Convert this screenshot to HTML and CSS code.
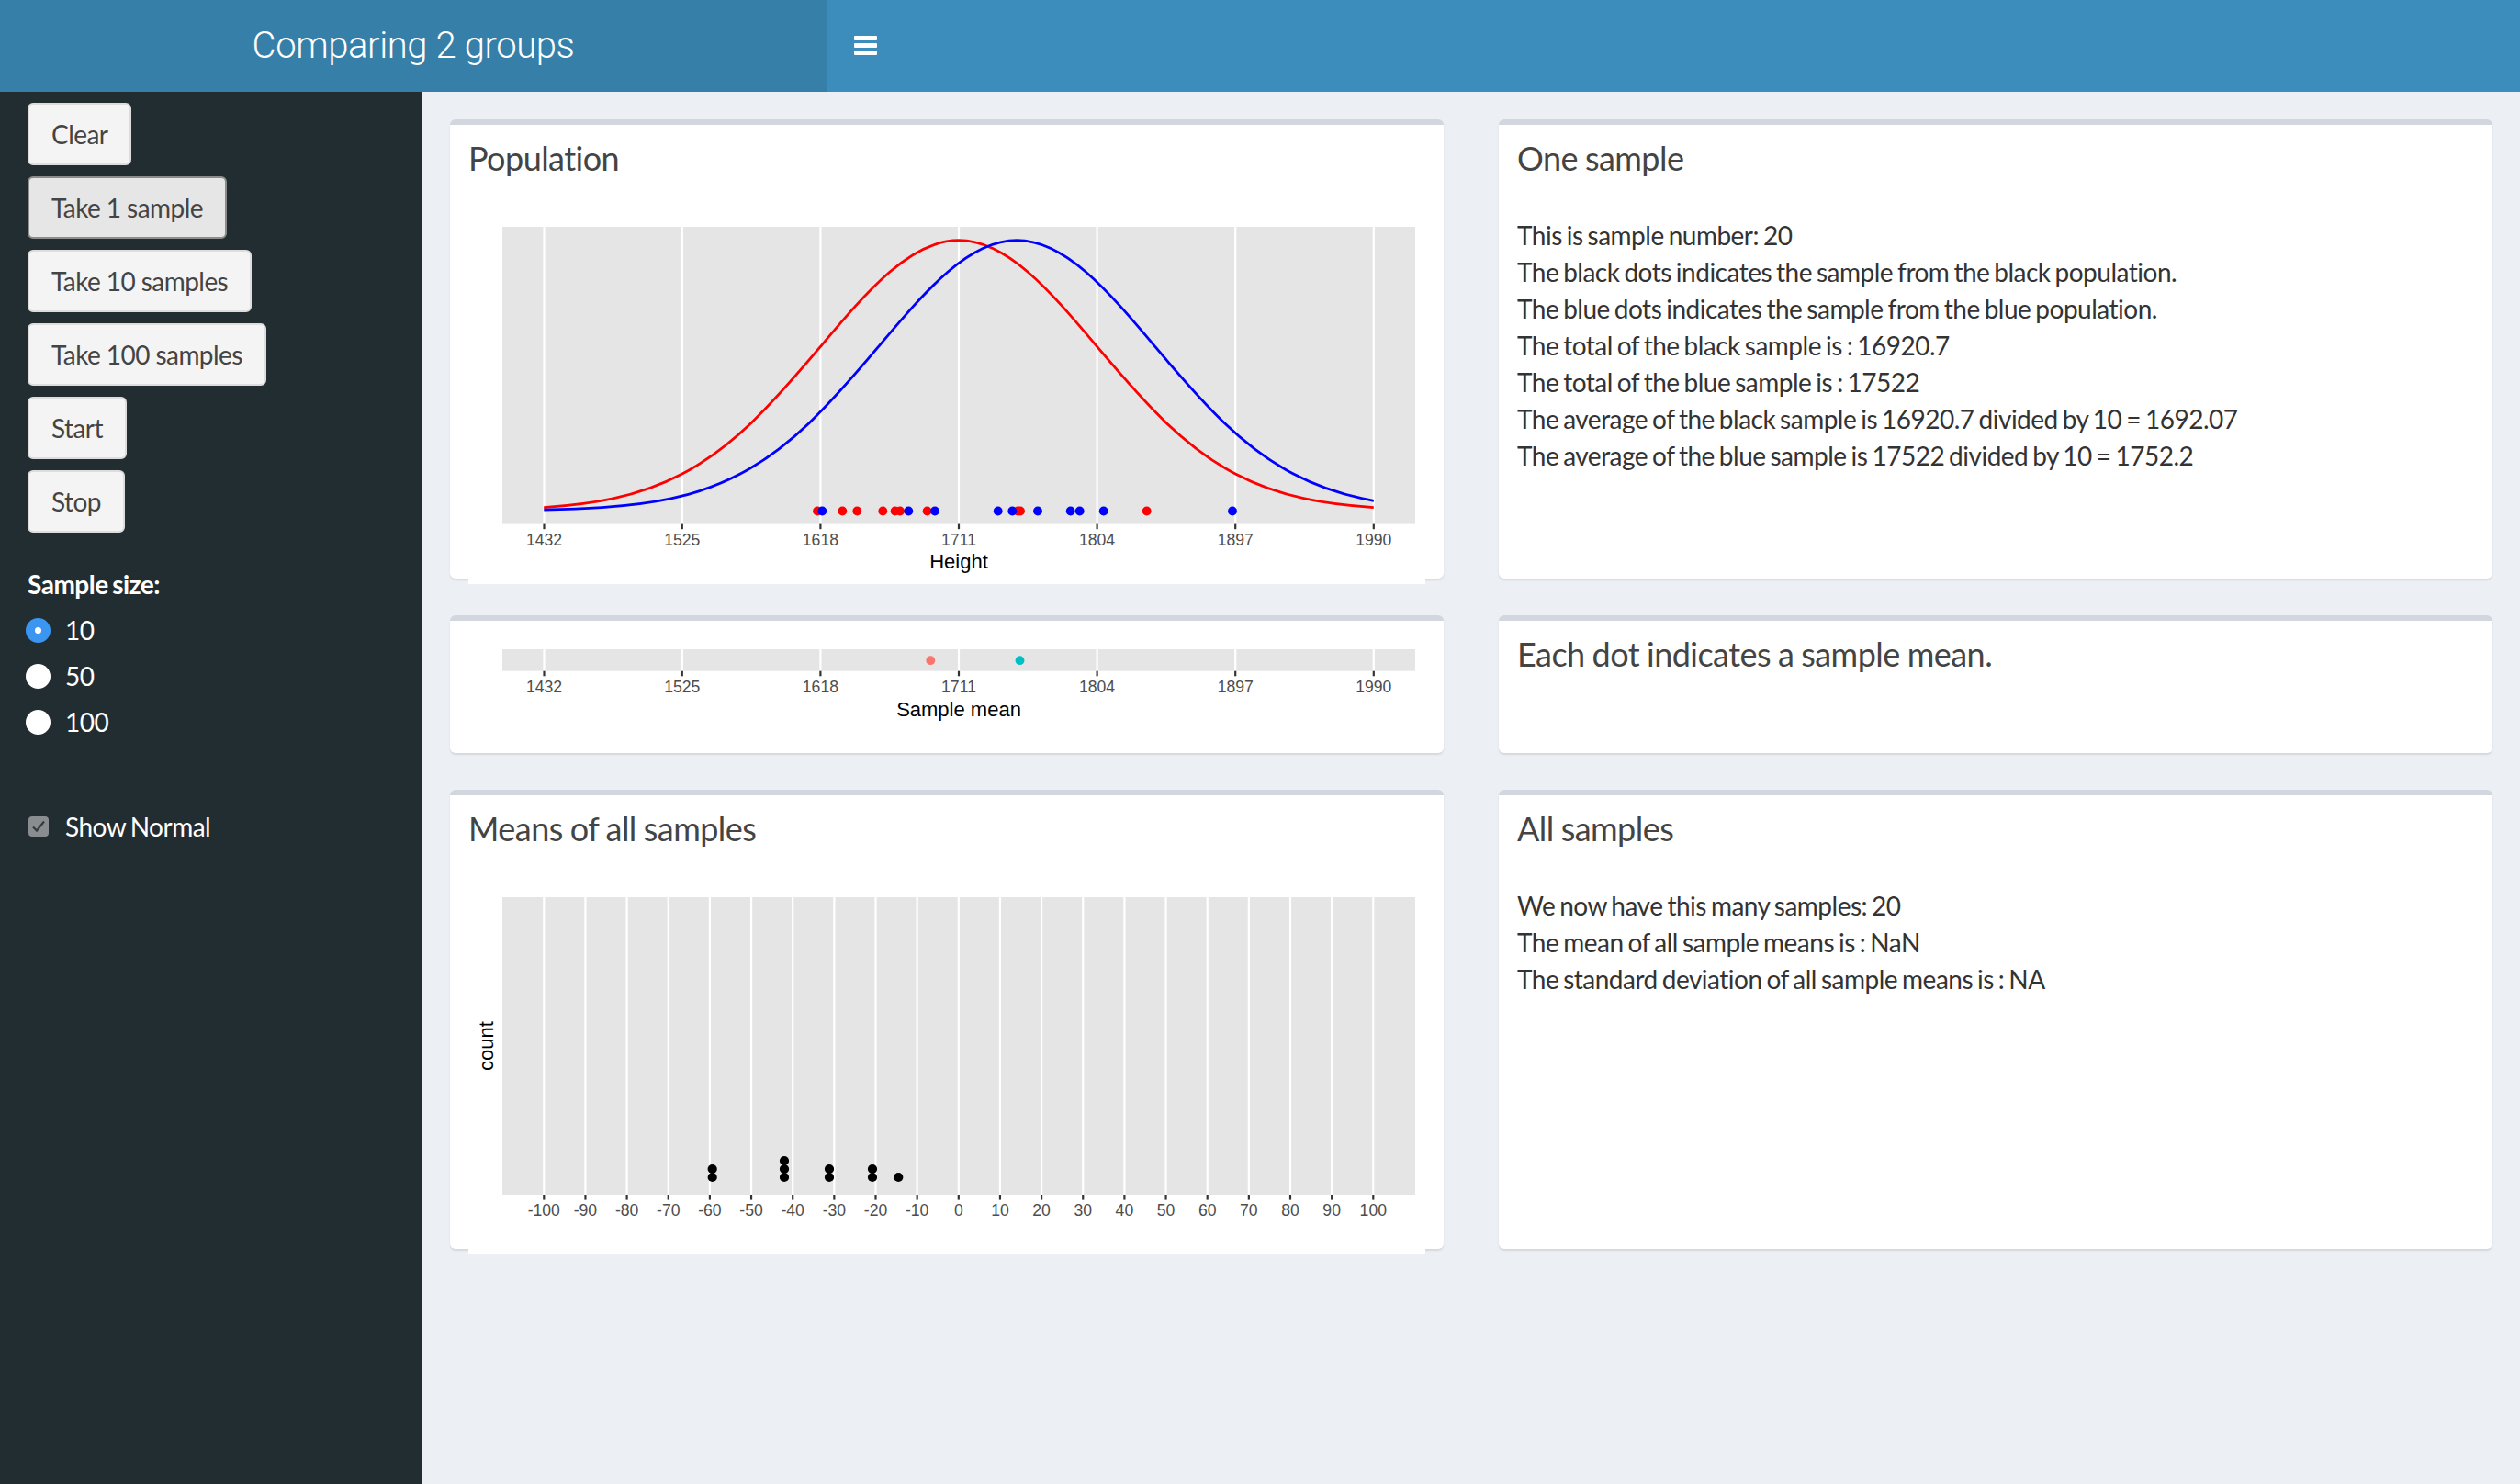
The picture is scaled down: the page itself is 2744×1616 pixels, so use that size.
FILE: index.html
```html
<!DOCTYPE html>
<html lang="en">
<head>
<meta charset="utf-8">
<title>Comparing 2 groups</title>
<link rel="stylesheet" href="styles.css">
</head>
<body>
<header class="main-header">
  <div class="logo">Comparing 2 groups</div>
  <nav class="navbar">
    <a class="sidebar-toggle" href="#">
      <svg width="25" height="21" viewBox="0 0 25 21"><rect x="0" y="0" width="25" height="5" rx="1" fill="#fff"/><rect x="0" y="8" width="25" height="5" rx="1" fill="#fff"/><rect x="0" y="16" width="25" height="5" rx="1" fill="#fff"/></svg>
    </a>
  </nav>
</header>
<div class="wrapper">
  <aside class="sidebar">
    <button class="btn">Clear</button>
    <button class="btn btn-focus">Take 1 sample</button>
    <button class="btn">Take 10 samples</button>
    <button class="btn">Take 100 samples</button>
    <button class="btn">Start</button>
    <button class="btn">Stop</button>
    <div class="input-group">
      <div class="input-label">Sample size:</div>
      <label class="radio"><span class="radio-dot checked"></span><span>10</span></label>
      <label class="radio"><span class="radio-dot"></span><span>50</span></label>
      <label class="radio"><span class="radio-dot"></span><span>100</span></label>
    </div>
    <div class="input-group check-group">
      <label class="check"><span class="check-box"><svg width="22" height="22" viewBox="0 0 22 22"><path d="M5 11.5 L9 15.5 L17 5.5" fill="none" stroke="#3a3a3a" stroke-width="2.2"/></svg></span><span>Show Normal</span></label>
    </div>
  </aside>
  <main class="content">
    <div class="row">
      <div class="box tall">
        <div class="box-header"><h3 class="box-title">Population</h3></div>
        <div class="box-body">
          <svg class="plot" width="1042" height="400" viewBox="0 0 1042 400">
            <rect x="37" y="11" width="994" height="323.6" fill="#e5e5e5"/>
            <g stroke="#fff" stroke-width="2.2">
              <line x1="82.5" y1="11" x2="82.5" y2="334.6"/>
              <line x1="232.8" y1="11" x2="232.8" y2="334.6"/>
              <line x1="383.4" y1="11" x2="383.4" y2="334.6"/>
              <line x1="534" y1="11" x2="534" y2="334.6"/>
              <line x1="684.6" y1="11" x2="684.6" y2="334.6"/>
              <line x1="835.2" y1="11" x2="835.2" y2="334.6"/>
              <line x1="985.8" y1="11" x2="985.8" y2="334.6"/>
            </g>
            <g stroke="#333" stroke-width="2.2">
              <line x1="82.5" y1="334.6" x2="82.5" y2="340.2"/>
              <line x1="232.8" y1="334.6" x2="232.8" y2="340.2"/>
              <line x1="383.4" y1="334.6" x2="383.4" y2="340.2"/>
              <line x1="534" y1="334.6" x2="534" y2="340.2"/>
              <line x1="684.6" y1="334.6" x2="684.6" y2="340.2"/>
              <line x1="835.2" y1="334.6" x2="835.2" y2="340.2"/>
              <line x1="985.8" y1="334.6" x2="985.8" y2="340.2"/>
            </g>
            <g class="tick-label">
              <text x="82.5" y="358">1432</text>
              <text x="232.8" y="358">1525</text>
              <text x="383.4" y="358">1618</text>
              <text x="534" y="358">1711</text>
              <text x="684.6" y="358">1804</text>
              <text x="835.2" y="358">1897</text>
              <text x="985.8" y="358">1990</text>
            </g>
            <text class="axis-title" x="534" y="383">Height</text>
            <path fill="none" stroke="#ff0000" stroke-width="2.8" d="M82.2,316.63 C107.3,315.00 132.4,312.36 157.5,306.97 C182.6,301.58 207.7,293.36 232.8,280.09 C257.9,266.82 283.0,248.27 308.1,224.39 C333.2,200.51 358.3,171.21 383.4,141.47 C408.5,111.73 433.6,81.91 458.7,60.28 C483.8,38.65 508.9,25.72 534.0,25.72 C559.1,25.72 584.2,38.65 609.3,60.28 C634.4,81.91 659.5,111.73 684.6,141.47 C709.7,171.21 734.8,200.51 759.9,224.39 C785.0,248.27 810.1,266.82 835.2,280.09 C860.3,293.36 885.4,301.58 910.5,306.97 C935.6,312.36 960.7,315.00 985.8,316.63"/>
            <path fill="none" stroke="#0000ff" stroke-width="2.8" d="M82.3,319.05 C103.3,318.64 124.4,318.00 145.4,316.63 C170.5,315.00 195.6,312.36 220.7,306.97 C245.8,301.58 270.9,293.36 296.0,280.09 C321.1,266.82 346.2,248.27 371.3,224.39 C396.4,200.51 421.5,171.21 446.6,141.47 C471.7,111.73 496.8,81.91 521.9,60.28 C547.0,38.65 572.1,25.72 597.2,25.72 C622.3,25.72 647.4,38.65 672.5,60.28 C697.6,81.91 722.7,111.73 747.8,141.47 C772.9,171.21 798.0,200.51 823.1,224.39 C848.2,248.27 873.3,266.82 898.4,280.09 C923.5,293.36 948.6,301.58 973.7,306.97 C977.8,307.84 981.8,308.65 985.9,309.38"/>
            <g fill="#ff0000">
              <circle cx="380" cy="320.5" r="4.9"/>
              <circle cx="407.3" cy="320.5" r="4.9"/>
              <circle cx="423.3" cy="320.5" r="4.9"/>
              <circle cx="451.3" cy="320.5" r="4.9"/>
              <circle cx="464.6" cy="320.5" r="4.9"/>
              <circle cx="470" cy="320.5" r="4.9"/>
              <circle cx="499.6" cy="320.5" r="4.9"/>
              <circle cx="598.3" cy="320.5" r="4.9"/>
              <circle cx="601" cy="320.5" r="4.9"/>
              <circle cx="738.7" cy="320.5" r="4.9"/>
            </g>
            <g fill="#0000ff">
              <circle cx="385.3" cy="320.5" r="4.9"/>
              <circle cx="479.3" cy="320.5" r="4.9"/>
              <circle cx="508" cy="320.5" r="4.9"/>
              <circle cx="576.7" cy="320.5" r="4.9"/>
              <circle cx="592.3" cy="320.5" r="4.9"/>
              <circle cx="620" cy="320.5" r="4.9"/>
              <circle cx="655.7" cy="320.5" r="4.9"/>
              <circle cx="665.7" cy="320.5" r="4.9"/>
              <circle cx="691.7" cy="320.5" r="4.9"/>
              <circle cx="832" cy="320.5" r="4.9"/>
            </g>
          </svg>
        </div>
      </div>
      <div class="box tall">
        <div class="box-header"><h3 class="box-title">One sample</h3></div>
        <div class="box-body text-body">
          <div>This is sample number: 20</div>
          <div>The black dots indicates the sample from the black population.</div>
          <div>The blue dots indicates the sample from the blue population.</div>
          <div>The total of the black sample is : 16920.7</div>
          <div>The total of the blue sample is : 17522</div>
          <div>The average of the black sample is 16920.7 divided by 10 = 1692.07</div>
          <div>The average of the blue sample is 17522 divided by 10 = 1752.2</div>
        </div>
      </div>
    </div>
    <div class="row">
      <div class="box short">
        <div class="box-body">
          <svg class="plot" width="1042" height="100" viewBox="0 0 1042 100">
            <rect x="37" y="11" width="994" height="23.7" fill="#e5e5e5"/>
            <g stroke="#fff" stroke-width="2.2">
              <line x1="82.5" y1="11" x2="82.5" y2="34.7"/>
              <line x1="232.8" y1="11" x2="232.8" y2="34.7"/>
              <line x1="383.4" y1="11" x2="383.4" y2="34.7"/>
              <line x1="534" y1="11" x2="534" y2="34.7"/>
              <line x1="684.6" y1="11" x2="684.6" y2="34.7"/>
              <line x1="835.2" y1="11" x2="835.2" y2="34.7"/>
              <line x1="985.8" y1="11" x2="985.8" y2="34.7"/>
            </g>
            <g stroke="#333" stroke-width="2.2">
              <line x1="82.5" y1="34.7" x2="82.5" y2="40.3"/>
              <line x1="232.8" y1="34.7" x2="232.8" y2="40.3"/>
              <line x1="383.4" y1="34.7" x2="383.4" y2="40.3"/>
              <line x1="534" y1="34.7" x2="534" y2="40.3"/>
              <line x1="684.6" y1="34.7" x2="684.6" y2="40.3"/>
              <line x1="835.2" y1="34.7" x2="835.2" y2="40.3"/>
              <line x1="985.8" y1="34.7" x2="985.8" y2="40.3"/>
            </g>
            <g class="tick-label">
              <text x="82.5" y="58">1432</text>
              <text x="232.8" y="58">1525</text>
              <text x="383.4" y="58">1618</text>
              <text x="534" y="58">1711</text>
              <text x="684.6" y="58">1804</text>
              <text x="835.2" y="58">1897</text>
              <text x="985.8" y="58">1990</text>
            </g>
            <text class="axis-title" x="534" y="84">Sample mean</text>
            <circle cx="503.3" cy="23.2" r="4.9" fill="#f8766d"/>
            <circle cx="600.5" cy="23.2" r="4.9" fill="#00bfc4"/>
          </svg>
        </div>
      </div>
      <div class="box short">
        <div class="box-header"><h3 class="box-title">Each dot indicates a sample mean.</h3></div>
      </div>
    </div>
    <div class="row">
      <div class="box tall">
        <div class="box-header"><h3 class="box-title">Means of all samples</h3></div>
        <div class="box-body">
          <svg class="plot" width="1042" height="400" viewBox="0 0 1042 400">
            <rect x="37" y="11" width="994" height="324" fill="#e5e5e5"/>
            <g stroke="#fff" stroke-width="2.2">
              <line x1="82.3" y1="11" x2="82.3" y2="335"/>
              <line x1="127.45" y1="11" x2="127.45" y2="335"/>
              <line x1="172.6" y1="11" x2="172.6" y2="335"/>
              <line x1="217.75" y1="11" x2="217.75" y2="335"/>
              <line x1="262.9" y1="11" x2="262.9" y2="335"/>
              <line x1="308.05" y1="11" x2="308.05" y2="335"/>
              <line x1="353.2" y1="11" x2="353.2" y2="335"/>
              <line x1="398.35" y1="11" x2="398.35" y2="335"/>
              <line x1="443.5" y1="11" x2="443.5" y2="335"/>
              <line x1="488.65" y1="11" x2="488.65" y2="335"/>
              <line x1="533.8" y1="11" x2="533.8" y2="335"/>
              <line x1="578.95" y1="11" x2="578.95" y2="335"/>
              <line x1="624.1" y1="11" x2="624.1" y2="335"/>
              <line x1="669.25" y1="11" x2="669.25" y2="335"/>
              <line x1="714.4" y1="11" x2="714.4" y2="335"/>
              <line x1="759.55" y1="11" x2="759.55" y2="335"/>
              <line x1="804.7" y1="11" x2="804.7" y2="335"/>
              <line x1="849.85" y1="11" x2="849.85" y2="335"/>
              <line x1="895" y1="11" x2="895" y2="335"/>
              <line x1="940.15" y1="11" x2="940.15" y2="335"/>
              <line x1="985.3" y1="11" x2="985.3" y2="335"/>
            </g>
            <g stroke="#333" stroke-width="2.2">
              <line x1="82.3" y1="335" x2="82.3" y2="340.6"/>
              <line x1="127.45" y1="335" x2="127.45" y2="340.6"/>
              <line x1="172.6" y1="335" x2="172.6" y2="340.6"/>
              <line x1="217.75" y1="335" x2="217.75" y2="340.6"/>
              <line x1="262.9" y1="335" x2="262.9" y2="340.6"/>
              <line x1="308.05" y1="335" x2="308.05" y2="340.6"/>
              <line x1="353.2" y1="335" x2="353.2" y2="340.6"/>
              <line x1="398.35" y1="335" x2="398.35" y2="340.6"/>
              <line x1="443.5" y1="335" x2="443.5" y2="340.6"/>
              <line x1="488.65" y1="335" x2="488.65" y2="340.6"/>
              <line x1="533.8" y1="335" x2="533.8" y2="340.6"/>
              <line x1="578.95" y1="335" x2="578.95" y2="340.6"/>
              <line x1="624.1" y1="335" x2="624.1" y2="340.6"/>
              <line x1="669.25" y1="335" x2="669.25" y2="340.6"/>
              <line x1="714.4" y1="335" x2="714.4" y2="340.6"/>
              <line x1="759.55" y1="335" x2="759.55" y2="340.6"/>
              <line x1="804.7" y1="335" x2="804.7" y2="340.6"/>
              <line x1="849.85" y1="335" x2="849.85" y2="340.6"/>
              <line x1="895" y1="335" x2="895" y2="340.6"/>
              <line x1="940.15" y1="335" x2="940.15" y2="340.6"/>
              <line x1="985.3" y1="335" x2="985.3" y2="340.6"/>
            </g>
            <g class="tick-label">
              <text x="82.3" y="358">-100</text>
              <text x="127.45" y="358">-90</text>
              <text x="172.6" y="358">-80</text>
              <text x="217.75" y="358">-70</text>
              <text x="262.9" y="358">-60</text>
              <text x="308.05" y="358">-50</text>
              <text x="353.2" y="358">-40</text>
              <text x="398.35" y="358">-30</text>
              <text x="443.5" y="358">-20</text>
              <text x="488.65" y="358">-10</text>
              <text x="533.8" y="358">0</text>
              <text x="578.95" y="358">10</text>
              <text x="624.1" y="358">20</text>
              <text x="669.25" y="358">30</text>
              <text x="714.4" y="358">40</text>
              <text x="759.55" y="358">50</text>
              <text x="804.7" y="358">60</text>
              <text x="849.85" y="358">70</text>
              <text x="895" y="358">80</text>
              <text x="940.15" y="358">90</text>
              <text x="985.3" y="358">100</text>
            </g>
            <text class="axis-title" transform="translate(27,173) rotate(-90)">count</text>
            <g fill="#000">
              <circle cx="265.7" cy="316" r="5.1"/>
              <circle cx="265.7" cy="307" r="5.1"/>
              <circle cx="344" cy="316" r="5.1"/>
              <circle cx="344" cy="307" r="5.1"/>
              <circle cx="344" cy="298" r="5.1"/>
              <circle cx="393" cy="316" r="5.1"/>
              <circle cx="393" cy="307" r="5.1"/>
              <circle cx="440" cy="316" r="5.1"/>
              <circle cx="440" cy="307" r="5.1"/>
              <circle cx="468.3" cy="316" r="5.1"/>
            </g>
          </svg>
        </div>
      </div>
      <div class="box tall">
        <div class="box-header"><h3 class="box-title">All samples</h3></div>
        <div class="box-body text-body">
          <div>We now have this many samples: 20</div>
          <div>The mean of all sample means is : NaN</div>
          <div>The standard deviation of all sample means is : NA</div>
        </div>
      </div>
    </div>
  </main>
</div>
</body>
</html>
```

FILE: styles.css
```css
* { box-sizing: border-box; }
html, body { margin: 0; padding: 0; }
body {
  font-family: "Source Sans Pro", Lato, "Noto Sans", sans-serif;
  font-size: 28px;
  line-height: 40px;
  letter-spacing: -0.018em;
  word-spacing: -0.06em;
  color: #333;
  background: #ecf0f5;
  width: 2744px;
  min-height: 1616px;
}
.main-header {
  display: flex;
  height: 100px;
}
.logo {
  width: 900px;
  background: #367fa9;
  color: #fff;
  text-align: center;
  font-family: "Helvetica Neue", Roboto, "Liberation Sans", sans-serif;
  font-weight: 300;
  font-size: 40px;
  line-height: 100px;
  letter-spacing: -0.01em;
  word-spacing: 0;
}
.navbar {
  flex: 1;
  background: #3c8dbc;
}
.sidebar-toggle {
  display: block;
  width: 85px;
  padding: 39px 30px 40px 30px;
  line-height: 0;
}
.wrapper {
  display: flex;
  min-height: 1516px;
}
.sidebar {
  width: 460px;
  flex: none;
  background: #222d32;
  color: #fff;
}
.btn {
  display: block;
  width: fit-content;
  margin: 12px 10px 12px 30px;
  padding: 12px 24px;
  font-family: inherit;
  font-size: 28px;
  line-height: 40px;
  letter-spacing: -0.02em;
  word-spacing: 0;
  color: #444;
  background: #f4f4f4;
  border: 2px solid #ddd;
  border-radius: 6px;
}
.btn-focus {
  background: #e6e6e6;
  border-color: #8c8c8c;
}
.input-group {
  padding: 24px 30px 0 30px;
}
.input-label {
  font-weight: 700;
  margin-bottom: 10px;
}
.radio, .check {
  display: flex;
  align-items: center;
  height: 40px;
  margin-bottom: 10px;
}
.radio-dot {
  width: 27px;
  height: 27px;
  margin-left: -2px;
  margin-right: 16px;
  border-radius: 50%;
  background: #fff;
  position: relative;
}
.radio-dot.checked {
  background: #3b96f2;
}
.radio-dot.checked::after {
  content: "";
  position: absolute;
  left: 10px;
  top: 10px;
  width: 7px;
  height: 7px;
  border-radius: 50%;
  background: #fff;
}
.check-group {
  padding-top: 64px;
}
.check-box {
  width: 22px;
  height: 22px;
  margin-left: 1px;
  margin-right: 18px;
  border-radius: 4px;
  background: #8a8d8f;
  line-height: 0;
}
.content {
  flex: 1;
  padding: 30px;
}
.row {
  display: grid;
  grid-template-columns: 1fr 1fr;
  column-gap: 60px;
}
.box {
  background: #fff;
  border-top: 6px solid #d2d6de;
  border-radius: 6px;
  box-shadow: 0 2px 2px rgba(0, 0, 0, 0.1);
  margin-bottom: 40px;
}
.box.tall { height: 500px; }
.box.short { height: 150px; }
.box-header {
  padding: 18px 20px 26px 20px;
}
.box-title {
  margin: 0;
  font-size: 36px;
  line-height: 36px;
  font-weight: 400;
  color: #444;
  letter-spacing: -0.015em;
  word-spacing: -0.02em;
}
.box-body {
  padding: 20px;
}
.plot {
  display: block;
  width: 100%;
  background: #fff;
  letter-spacing: 0;
  word-spacing: 0;
}
.tick-label text {
  font-family: "Liberation Sans", Arial, sans-serif;
  font-size: 17.6px;
  fill: #4d4d4d;
  text-anchor: middle;
}
.axis-title {
  font-family: "Liberation Sans", Arial, sans-serif;
  font-size: 22px;
  fill: #000;
  text-anchor: middle;
}
```
